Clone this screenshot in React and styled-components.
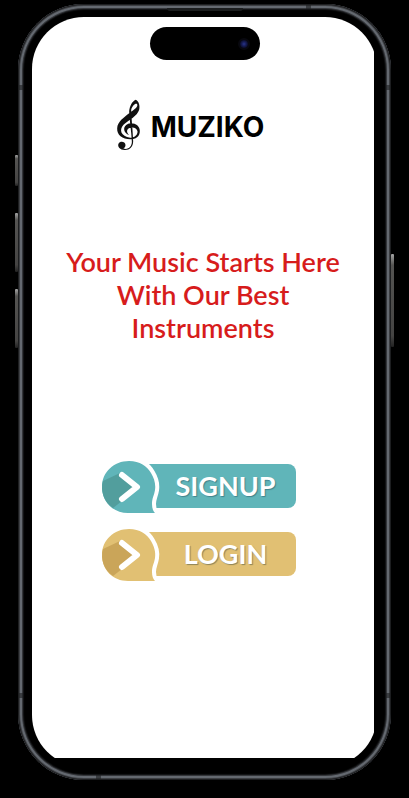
import React from "react";
import styled, { createGlobalStyle } from "styled-components";

const GlobalStyle = createGlobalStyle`
  *, *::before, *::after { box-sizing: border-box; }
  body { margin: 0; background: #000; }
`;

const Stage = styled.div`
  min-height: 100vh;
  display: flex;
  padding: 4px 18px 18px;
  background: #000;
`;

const Phone = styled.div`
  position: relative;
  flex: 1;
  display: flex;
  padding: 13px 14px;
  border-radius: 66px;
  background: #000;
  box-shadow:
    inset 0 0 0 1px #1d1e20,
    inset 0 0 0 2px #3d3f43,
    inset 0 0 0 4px #646970,
    inset 0 0 0 5px #34363a,
    inset 0 0 1px 6px #151618;
`;

const SideKey = styled.span`
  position: absolute;
  ${(p) => (p.$side === "left" ? "left: -3px;" : "right: -3px;")}
  top: ${(p) => p.$top}px;
  width: 3px;
  height: ${(p) => p.$length}px;
  border-radius: 1px;
  background: linear-gradient(#a5a5a5, #555452 12%, #454443 88%, #222);
`;

const AntennaBand = styled.span`
  position: absolute;
  ${(p) => (p.$side === "left" ? "left: 1px;" : "right: 1px;")}
  ${(p) => (p.$end === "top" ? "top: 81px;" : "bottom: 82px;")}
  width: 4px;
  height: 5px;
  background: rgba(30, 31, 33, 0.6);
`;

const EdgeBand = styled.span`
  position: absolute;
  ${(p) => (p.$end === "top" ? "top: 1px; right: 80px;" : "bottom: 1px; left: 78px;")}
  width: 5px;
  height: 4px;
  background: rgba(30, 31, 33, 0.6);
`;

const Earpiece = styled.span`
  position: absolute;
  top: 4px;
  left: 50%;
  width: 76px;
  height: 3px;
  margin-left: -38px;
  border-radius: 0 0 3px 3px;
  background: #1b1d1e;
`;

const Display = styled.div`
  flex: 1;
  display: flex;
  padding: 0 3px 9px 0;
  border-radius: 52px;
  overflow: hidden;
`;

const Screen = styled.main`
  flex: 1;
  display: flex;
  flex-direction: column;
  align-items: center;
  padding: 82px 24px 24px;
  background: #fff;
`;

const Island = styled.div`
  position: absolute;
  top: 23px;
  left: 50%;
  width: 110px;
  height: 33px;
  margin-left: -55px;
  display: flex;
  align-items: center;
  justify-content: flex-end;
  padding-right: 10px;
  border-radius: 17px;
  background: #000;
`;

const Lens = styled.span`
  width: 12px;
  height: 12px;
  border: 2px solid #08080f;
  border-radius: 50%;
  background: radial-gradient(circle, #29348a 0, #151b52 40%, #090b22 75%);
`;

const Brand = styled.div`
  display: flex;
  align-items: center;
  gap: 10px;
  height: 52px;
  margin-right: 26px;
`;

const BrandName = styled.span`
  padding-top: 4px;
  font: 700 28px/36px Inter, sans-serif;
  color: #000;
`;

const Tagline = styled.h1`
  max-width: 290px;
  margin: 94px 0 117px;
  font: 600 27px/33px Lato, sans-serif;
  text-align: center;
  color: #d71c1c;
`;

const Actions = styled.nav`
  display: flex;
  flex-direction: column;
  gap: 16px;
  margin-right: 8px;
`;

const ActionButton = styled.button`
  display: flex;
  align-items: flex-start;
  width: 194px;
  height: 52px;
  padding: 0;
  border: 0;
  background: none;
  cursor: pointer;
`;

const BadgeSvg = styled.svg`
  position: relative;
  flex: none;
  width: 58px;
  height: 52px;
  margin-right: -11px;
  overflow: visible;
`;

const ActionLabel = styled.span`
  flex: 1;
  height: 44px;
  margin-top: 3px;
  padding-left: 6px;
  border-radius: 0 8px 8px 0;
  background: ${(p) => p.$color};
  font: 700 27px/44px Lato, sans-serif;
  text-align: center;
  color: #fff;
  text-shadow: 1px 1px 1px ${(p) => p.$shadow};
`;

function TrebleClef() {
  return (
    <svg width="25" height="52" viewBox="48 26 74 156" aria-hidden="true">
      <path
        fill="#111"
        d="M106 28C116 31 120 46 117 58C111 78 86 88 70 103C56 118 62 138 90 142C104 143 113 133 112 123C110 112 98 109 88 113C79 117 78 126 87 134C71 128 67 112 79 103C96 93 119 103 119 122C119 139 106 147 91 147C66 147 50 134 51 114C52 94 71 82 87 69C104 56 114 50 111 42C107 37 96 46 93 59C93 73 98 123 99 153C99 171 87 180 73 179C60 178 51 169 55 160C60 151 75 153 76 164C76 169 73 173 69 174C82 180 96 170 95 153C94 124 87 82 87 63C88 47 97 32 106 28Z"
      />
    </svg>
  );
}

function ArrowBadge({ color, fold }) {
  const body =
    "M27 0C38 0 45 5 49 12C52 17 54 23 53 29C52 35 50 37 50 43C50 47 51 50 53 52H26C11 52 0 41 0 26C0 11 12 0 27 0Z";
  return (
    <BadgeSvg viewBox="0 0 58 52" aria-hidden="true">
      <path d={body} fill="none" stroke="#fff" strokeWidth="8" />
      <path d={body} fill={color} />
      <path d="M1 20L18 12L36 26L20 40L11 47C2 41-2 30 1 20Z" fill={fold} />
      <path
        d="M20 14L35 26L20 38"
        fill="none"
        stroke="#fff"
        strokeWidth="6"
        strokeLinecap="round"
        strokeLinejoin="round"
      />
    </BadgeSvg>
  );
}

const actions = [
  { label: "SIGNUP", color: "#60b5b9", fold: "#529e9d", shadow: "#41838d" },
  { label: "LOGIN", color: "#e1c073", fold: "#caa559", shadow: "#8d8358" },
];

export default function App() {
  return (
    <>
      <GlobalStyle />
      <Stage>
        <Phone>
          <SideKey $side="left" $top={151} $length={31} />
          <SideKey $side="left" $top={209} $length={59} />
          <SideKey $side="left" $top={285} $length={59} />
          <SideKey $side="right" $top={250} $length={93} />
          <AntennaBand $side="left" $end="top" />
          <AntennaBand $side="right" $end="top" />
          <AntennaBand $side="left" $end="bottom" />
          <AntennaBand $side="right" $end="bottom" />
          <EdgeBand $end="top" />
          <EdgeBand $end="bottom" />
          <Earpiece />
          <Display>
            <Screen>
              <Brand>
                <TrebleClef />
                <BrandName>MUZIKO</BrandName>
              </Brand>
              <Tagline>Your Music Starts Here With Our Best Instruments</Tagline>
              <Actions>
                {actions.map((a) => (
                  <ActionButton key={a.label} type="button">
                    <ArrowBadge color={a.color} fold={a.fold} />
                    <ActionLabel $color={a.color} $shadow={a.shadow}>
                      {a.label}
                    </ActionLabel>
                  </ActionButton>
                ))}
              </Actions>
            </Screen>
          </Display>
          <Island>
            <Lens />
          </Island>
        </Phone>
      </Stage>
    </>
  );
}
